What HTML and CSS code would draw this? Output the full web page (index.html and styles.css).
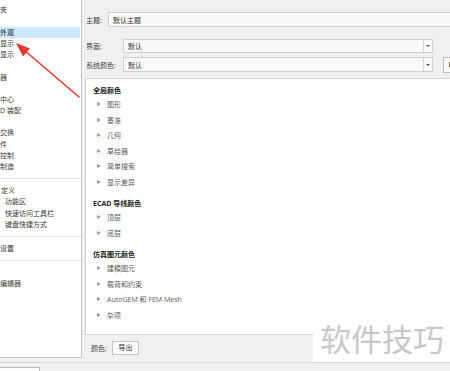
FILE: index.html
```html
<!DOCTYPE html>
<html lang="zh-CN">
<head>
    <meta charset="UTF-8">
    <title>选项 - 系统外观</title>
    <link rel="stylesheet" href="styles.css">
</head>
<body>
    <div class="top">
        <!-- Left: option categories (only the part that shows in the pane) -->
        <aside class="nav">
            <ul class="nav-list">
                <li class="nav-item">夹</li>
                <li class="nav-item"></li>
                <li class="nav-item selected">外观</li>
                <li class="nav-item">显示</li>
                <li class="nav-item">显示</li>
                <li class="nav-item"></li>
                <li class="nav-item">器</li>
                <li class="nav-item"></li>
                <li class="nav-item">中心</li>
                <li class="nav-item">D 装配</li>
                <li class="nav-item"></li>
                <li class="nav-item">交换</li>
                <li class="nav-item">件</li>
                <li class="nav-item">控制</li>
                <li class="nav-item">制造</li>
                <li class="nav-sep"></li>
                <li class="nav-item parent">定义</li>
                <li class="nav-item child">功能区</li>
                <li class="nav-item child">快速访问工具栏</li>
                <li class="nav-item child">键盘快捷方式</li>
                <li class="nav-sep"></li>
                <li class="nav-item">设置</li>
                <li class="nav-sep"></li>
                <li class="nav-item"></li>
                <li class="nav-item">编辑器</li>
            </ul>
        </aside>

        <!-- Right: appearance settings -->
        <main class="main">
            <div class="form-row row-theme">
                <span class="label label-theme">主题:</span>
                <div class="field field-theme">默认主题</div>
            </div>
            <div class="form-row row-ui">
                <span class="label label-wide">界面:</span>
                <div class="field select"><span class="select-text">默认</span><span class="select-arrow"></span></div>
            </div>
            <div class="form-row row-sys">
                <span class="label label-wide">系统颜色:</span>
                <div class="field select"><span class="select-text">默认</span><span class="select-arrow"></span></div>
                <div class="side-btn"></div>
            </div>

            <div class="panel">
                <div class="group">
                    <div class="group-title">全局颜色</div>
                    <div class="tree-item">图形</div>
                    <div class="tree-item">基准</div>
                    <div class="tree-item">几何</div>
                    <div class="tree-item">草绘器</div>
                    <div class="tree-item">简单搜索</div>
                    <div class="tree-item">显示差异</div>
                </div>
                <div class="group">
                    <div class="group-title">ECAD 导线颜色</div>
                    <div class="tree-item">顶层</div>
                    <div class="tree-item">底层</div>
                </div>
                <div class="group">
                    <div class="group-title">仿真图元颜色</div>
                    <div class="tree-item">建模图元</div>
                    <div class="tree-item">载荷和约束</div>
                    <div class="tree-item">AutoGEM 和 FEM Mesh</div>
                    <div class="tree-item">杂项</div>
                </div>
            </div>

            <div class="panel-foot">
                <span class="label label-color">颜色:</span>
                <div class="btn">导出</div>
            </div>
        </main>
    </div>

    <div class="bottom">
        <div class="bottom-btn"></div>
    </div>

    <div class="watermark">软件技巧</div>

    <svg class="callout" width="450" height="371" viewBox="0 0 450 371">
        <line x1="79" y1="97" x2="24" y2="50" stroke="#e5392f" stroke-width="1.6" stroke-linecap="round"/>
        <polygon points="16,43 30,48.5 23,56.5" fill="#e5392f"/>
    </svg>
</body>
</html>
```

FILE: styles.css
```css
* {
    margin: 0;
    padding: 0;
    box-sizing: border-box;
}

body {
    position: relative;
    width: 450px;
    height: 371px;
    overflow: hidden;
    background: #f0f0f0;
    font-family: "Open Sans", "Noto Sans CJK SC", sans-serif;
    font-size: 7px;
    color: #333;
}

.top {
    display: flex;
    height: 362px;
}

/* left category list */
.nav {
    flex-shrink: 0;
    width: 82px;
    height: 358px;
    background: #fff;
    border-right: 1px solid #c9c9c9;
    border-bottom: 1px solid #c9c9c9;
    overflow: hidden;
}

.nav-list {
    list-style: none;
    padding-top: 4.4px;
}

.nav-item {
    height: 11.2px;
    line-height: 11.2px;
    white-space: nowrap;
    color: #3a3a3a;
}

.nav-item.parent {
    padding-left: 1px;
}

.nav-item.child {
    padding-left: 5px;
}

.nav-item.selected {
    margin-right: 1px;
    background: #cce8ff;
    color: #111;
}

.nav-sep {
    height: 1px;
    margin: 6px 0;
    background: #e4e4e4;
}

/* right side */
.main {
    flex: 1;
    min-width: 0;
    padding-left: 3px;
    display: flex;
    flex-direction: column;
}

.form-row {
    display: flex;
    align-items: center;
    padding-left: 1px;
}

.label {
    flex-shrink: 0;
    color: #444;
}

.label-theme {
    width: 22px;
}

.label-wide {
    width: 37px;
}

.field {
    flex-shrink: 0;
    height: 100%;
    border: 1px solid #cfcfcf;
    background: #f9f9f9;
    padding-left: 4px;
    display: flex;
    align-items: center;
    white-space: nowrap;
}

.row-theme {
    margin-top: 12px;
    height: 15px;
}

.field-theme {
    flex: 1;
    margin-right: -4px;
}

.row-ui {
    margin-top: 12px;
    height: 14px;
}

.row-sys {
    margin-top: 4px;
    height: 15px;
}

.select {
    width: 310px;
    padding-left: 0;
}

.select-text {
    flex: 1;
    padding-left: 4px;
}

.select-arrow {
    width: 9px;
    height: 100%;
    border-left: 1px solid #d4d4d4;
    display: flex;
    align-items: center;
    justify-content: center;
}

.select-arrow::after {
    content: "";
    border-top: 2.5px solid #555;
    border-left: 2px solid transparent;
    border-right: 2px solid transparent;
}

.side-btn {
    flex-shrink: 0;
    margin-left: 10px;
    width: 20px;
    height: 16px;
    border: 1px solid #bdbdbd;
    background: #fafafa;
    display: flex;
    align-items: center;
    padding-left: 5px;
}

.side-btn::before {
    content: "";
    width: 2px;
    height: 5px;
    background: #8a6d3b;
}

/* color tree */
.panel {
    margin-top: 6px;
    margin-right: -2px;
    height: 257px;
    border: 1px solid #d3d3d3;
    border-right: none;
    background: #fff;
    padding: 4.5px 0 0 7px;
}

.group + .group {
    margin-top: 7px;
}

.group-title {
    height: 13px;
    line-height: 13px;
    font-weight: bold;
    color: #222;
}

.tree-item {
    height: 15.5px;
    display: flex;
    align-items: center;
    color: #5a5a5a;
    white-space: nowrap;
}

.tree-item::before {
    content: "";
    margin: 0 6px 0 4px;
    border-left: 4px solid #9c9c9c;
    border-top: 2.5px solid transparent;
    border-bottom: 2.5px solid transparent;
}

.panel-foot {
    display: flex;
    align-items: center;
    margin-top: 6px;
    height: 14px;
    padding-left: 6px;
}

.label-color {
    width: 21px;
}

.btn {
    width: 27px;
    height: 14px;
    border: 1px solid #c4c4c4;
    background: #fcfcfc;
    text-align: center;
    line-height: 12px;
    color: #333;
}

/* bottom bar */
.bottom {
    height: 9px;
    border-top: 1px solid #d8d8d8;
}

.bottom-btn {
    margin: 4px 0 0 -2px;
    width: 42px;
    height: 12px;
    border: 1px solid #bdbdbd;
    background: #fdfdfd;
}

.watermark {
    position: absolute;
    left: 313px;
    top: 318px;
    width: 137px;
    height: 44px;
    padding-left: 7px;
    background: #fff;
    color: #c8c8c8;
    font-family: "Noto Sans CJK SC", sans-serif;
    font-size: 31px;
    line-height: 40px;
    white-space: nowrap;
}

.callout {
    position: absolute;
    left: 0;
    top: 0;
    pointer-events: none;
}
```
